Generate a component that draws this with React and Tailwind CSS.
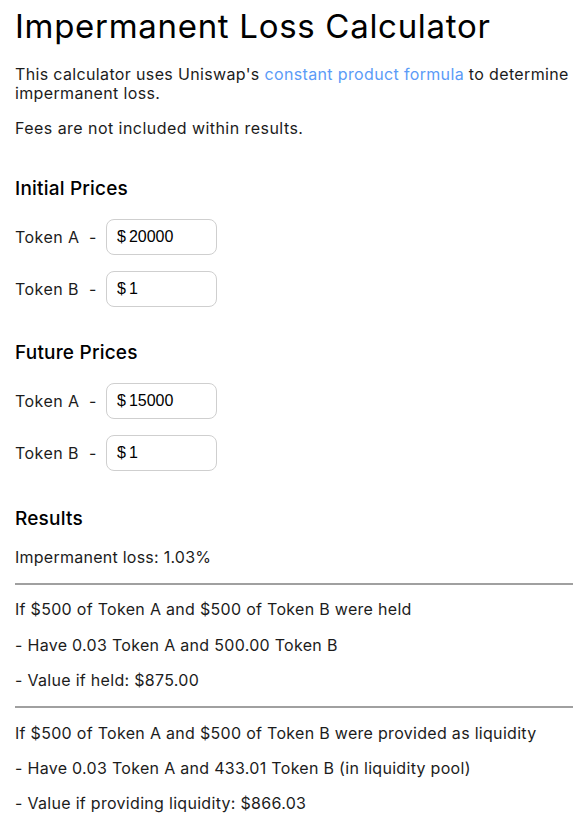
import React, { useState } from "react";

const font = { fontFamily: "Inter, 'Noto Sans', sans-serif" };

// a price row: label, dash, $ input
const PriceRow = ({ label, value, onChange, className }) => (
  <div className={"flex items-center " + className}>
    <span className="w-[74px] text-[16px] tracking-[0.45px] text-[#1c1c1c]">{label}</span>
    <span className="w-[17px] text-[16px] text-[#1c1c1c]">-</span>
    <div className="flex h-[36px] w-[111px] items-center rounded-[8px] border border-[#cfcfcf] pl-[10px] font-['Liberation_Sans',Arial,sans-serif] text-[16px] text-black">
      <span className="mr-[3px]">$</span>
      <input
        className="w-[80px] bg-transparent outline-none"
        value={value}
        onChange={(e) => onChange(e.target.value)}
      />
    </div>
  </div>
);

const Line = ({ children, className }) => (
  <p className={"text-[16px] leading-[19px] " + className}>{children}</p>
);

const App = () => {
  const [initA, setInitA] = useState("20000");
  const [initB, setInitB] = useState("1");
  const [futA, setFutA] = useState("15000");
  const [futB, setFutB] = useState("1");

  return (
    <div style={font} className="bg-white pl-[15px] pr-[2px] pt-[6px] pb-[12px] text-[#1c1c1c]">
      <h1 className="text-[33px] leading-[40px] tracking-[0.7px] font-normal text-black">
        Impermanent Loss Calculator
      </h1>
      <p className="mt-[19px] text-[16px] leading-[19px] tracking-[0.35px]">
        This calculator uses Uniswap's{" "}
        <a href="#" className="text-[#5b9bf7]">
          constant product formula
        </a>{" "}
        to determine impermanent loss.
      </p>
      <Line className="mt-[16px] tracking-[0.45px]">Fees are not included within results.</Line>

      <h3 className="mt-[39px] text-[19px] leading-[24px] tracking-[0.2px] font-medium text-black">
        Initial Prices
      </h3>
      <PriceRow className="mt-[18px]" label="Token A" value={initA} onChange={setInitA} />
      <PriceRow className="mt-[16px]" label="Token B" value={initB} onChange={setInitB} />

      <h3 className="mt-[34px] text-[19px] leading-[24px] tracking-[0.2px] font-medium text-black">
        Future Prices
      </h3>
      <PriceRow className="mt-[18px]" label="Token A" value={futA} onChange={setFutA} />
      <PriceRow className="mt-[16px]" label="Token B" value={futB} onChange={setFutB} />

      <h3 className="mt-[36px] text-[19px] leading-[24px] tracking-[0.2px] font-medium text-black">
        Results
      </h3>
      <Line className="mt-[17px] tracking-[0.25px]">Impermanent loss: 1.03%</Line>
      <hr className="mt-[16px] mr-[7px] border-t-[2px] border-[#a0a0a0]" />
      <Line className="mt-[15px] tracking-[0.3px]">If $500 of Token A and $500 of Token B were held</Line>
      <Line className="mt-[17px] tracking-[0.3px]">- Have 0.03 Token A and 500.00 Token B</Line>
      <Line className="mt-[16px] tracking-[0.3px]">- Value if held: $875.00</Line>
      <hr className="mt-[16px] mr-[7px] border-t-[2px] border-[#a0a0a0]" />
      <Line className="mt-[16px] tracking-[0.3px]">
        If $500 of Token A and $500 of Token B were provided as liquidity
      </Line>
      <Line className="mt-[16px] tracking-[0.3px]">
        - Have 0.03 Token A and 433.01 Token B (in liquidity pool)
      </Line>
      <Line className="mt-[16px] tracking-[0.3px]">- Value if providing liquidity: $866.03</Line>
    </div>
  );
};

export default App;
